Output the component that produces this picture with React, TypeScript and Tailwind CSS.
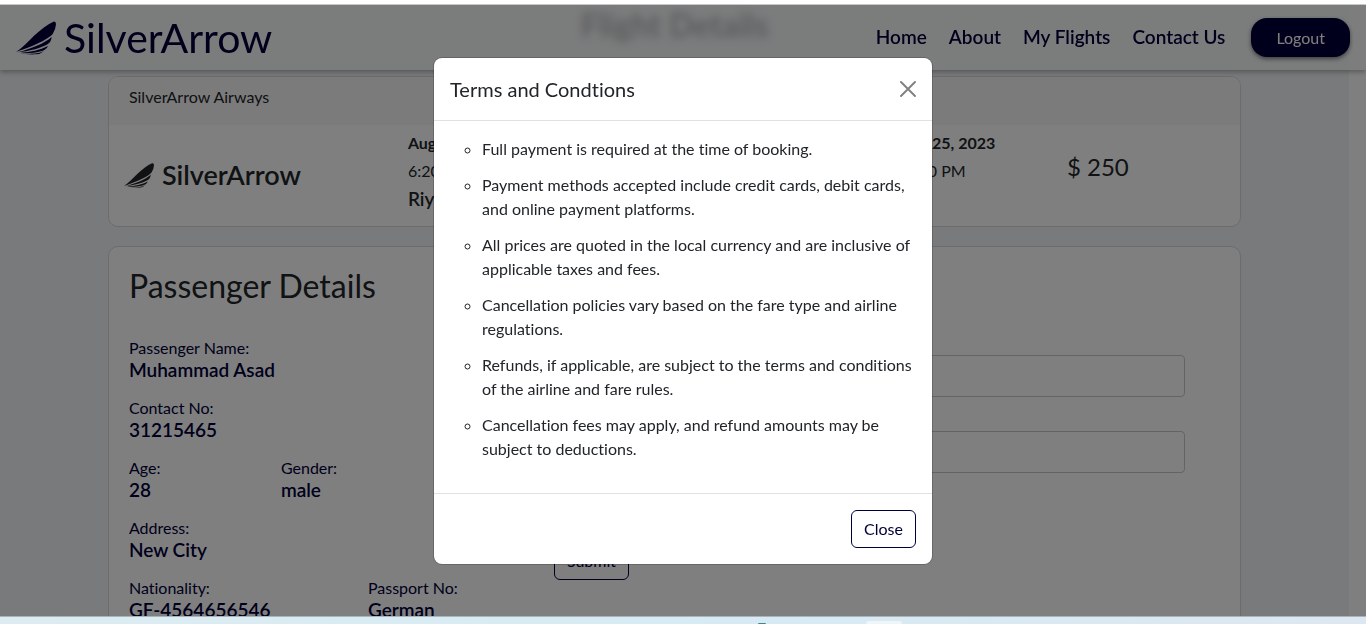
import React from "react";

const terms = [
  "Full payment is required at the time of booking.",
  "Payment methods accepted include credit cards, debit cards, and online payment platforms.",
  "All prices are quoted in the local currency and are inclusive of applicable taxes and fees.",
  "Cancellation policies vary based on the fare type and airline regulations.",
  "Refunds, if applicable, are subject to the terms and conditions of the airline and fare rules.",
  "Cancellation fees may apply, and refund amounts may be subject to deductions.",
];

function Wing({ className }: { className: string }) {
  return (
    <svg viewBox="0 0 120 98" className={className} fill="currentColor" aria-hidden="true">
      <path d="M0 91C20 78 36 60 54 42C74 24 94 8 112 0Q120 -2 120 8Q119 24 110 37C96 52 66 68 0 91Z" />
      <path d="M6 92C50 79 84 66 107 46Q106 62 92 69C70 80 40 88 6 92Z" />
      <path d="M12 94C44 91 72 85 96 73Q91 84 78 88C56 94 34 96 12 94Z" />
      <path d="M28 97C48 97 66 96 84 89Q73 98 58 98C48 99 38 98 28 97Z" />
    </svg>
  );
}

function Field({ label, value, className = "" }: { label: string; value: string; className?: string }) {
  return (
    <div className={className}>
      <dt className="text-base leading-5">{label}</dt>
      <dd className="text-[19px] leading-6 font-semibold">{value}</dd>
    </div>
  );
}

export default function App() {
  return (
    <div className="flex h-screen flex-col overflow-hidden bg-white font-['Lato',sans-serif] text-base text-[#212529] [font-variant-ligatures:none]">
      <div className="h-[5px] shrink-0 border-b border-[#c8c8c8] bg-white" />
      <div className="relative min-h-0 flex-1 overflow-hidden">
        <div className="h-full overflow-hidden pr-[17px]">
          <main className="flex min-h-full flex-col items-center bg-[#f1f4f7]">
            <h1 className="pb-8 text-[32px] leading-[39px] font-bold">Flight Details</h1>
            <section className="mb-[19px] w-[84%] rounded-[10px] border border-[#d8d8d8] bg-white">
              <header className="h-12 rounded-t-[10px] bg-[#f7f7f7] px-5 pt-2 leading-6">SilverArrow Airways</header>
              <div className="flex h-[101px]">
                <div className="flex w-[299px] items-center gap-2 pl-[15px] text-[27px] font-semibold">
                  <Wing className="h-[25px] w-[30px]" />
                  SilverArrow
                </div>
                <div className="w-[488px] pt-1">
                  <p className="leading-7 font-bold">August 25, 2023</p>
                  <p className="leading-7">6:20 PM</p>
                  <p className="text-[19px] leading-7 font-semibold">Riyadh</p>
                </div>
                <div className="w-[171px] pt-1">
                  <p className="leading-7 font-bold">Sept 25, 2023</p>
                  <p className="leading-7">10:20 PM</p>
                </div>
                <p className="pt-6 text-2xl leading-9">$ 250</p>
              </div>
            </section>
            <section className="flex w-[84%] rounded-[10px] border border-[#d8d8d8] bg-white px-5 pt-[19px] pb-10">
              <div className="w-[425px] text-[#000038]">
                <h2 className="mb-8 text-[32px] leading-10 text-[#212529]">Passenger Details</h2>
                <dl className="flex flex-col gap-4">
                  <Field label="Passenger Name:" value="Muhammad Asad" />
                  <Field label="Contact No:" value="31215465" />
                  <div className="flex">
                    <Field label="Age:" value="28" className="w-[152px]" />
                    <Field label="Gender:" value="male" />
                  </div>
                  <Field label="Address:" value="New City" />
                  <div className="flex">
                    <Field label="Nationality:" value="GF-4564656546" className="w-[239px]" />
                    <Field label="Passport No:" value="German" />
                  </div>
                </dl>
              </div>
              <form className="mr-[35px] flex flex-1 flex-col items-start pt-[57px]" onSubmit={(e) => e.preventDefault()}>
                <label htmlFor="card-name" className="mb-2 leading-6">Name on Card</label>
                <input id="card-name" className="mb-[2px] h-[42px] w-full rounded border border-[#c8c8c8] bg-white px-3" />
                <label htmlFor="card-number" className="mb-2 leading-6">Card Number</label>
                <input id="card-number" className="h-[42px] w-full rounded border border-[#c8c8c8] bg-white px-3" />
                <button className="mt-[69px] h-[38px] rounded-md border border-[#000038] px-3 text-[#000038]">Submit</button>
              </form>
            </section>
          </main>
        </div>

        <nav className="absolute inset-x-0 top-0 flex h-[65px] items-center justify-between bg-[#f8f9fa]/70 px-4 text-[#000038] shadow-[0_2px_5px_rgba(0,0,0,0.3)] backdrop-blur-[4px]">
          <a href="#home" className="flex items-center gap-2 text-[41px] leading-[60px]">
            <Wing className="h-[34px] w-10" />
            SilverArrow
          </a>
          <div className="flex items-center gap-[22px] text-[19px] font-semibold">
            <a href="#home">Home</a>
            <a href="#about">About</a>
            <a href="#flights">My Flights</a>
            <a href="#contact">Contact Us</a>
            <button className="ml-1 h-[39px] rounded-2xl bg-[#000038] px-[25px] text-base font-normal text-white shadow-[0_2px_4px_rgba(0,0,0,0.5)]">Logout</button>
          </div>
        </nav>

        <div className="absolute inset-0 flex items-start justify-center bg-black/50 pt-[53px]">
          <div role="dialog" aria-modal="true" aria-labelledby="terms-title" className="w-[498px] rounded-lg bg-white shadow-[0_0_0_1px_rgba(0,0,0,0.18)]">
            <header className="flex items-center justify-between border-b border-[#dee2e6] p-4">
              <h2 id="terms-title" className="text-xl leading-[30px]">Terms and Condtions</h2>
              <button aria-label="Close dialog" className="text-[#808080]">
                <svg viewBox="0 0 16 16" className="size-4" stroke="currentColor" strokeWidth="1.9" strokeLinecap="round"><path d="M1 1L15 15M15 1L1 15" /></svg>
              </button>
            </header>
            <ul className="flex list-[circle] flex-col gap-3 py-4 pr-4 pl-12 leading-6">
              {terms.map((term) => (
                <li key={term}>{term}</li>
              ))}
            </ul>
            <footer className="mt-4 flex justify-end border-t border-[#dee2e6] p-4">
              <button className="h-[38px] rounded-md border border-[#000038] px-3 text-[#000038]">Close</button>
            </footer>
          </div>
        </div>
      </div>
      <div className="flex h-2 shrink-0 items-end justify-center gap-[100px] overflow-hidden border-t border-[#a8b4ba] bg-linear-to-r from-[#dcecf1] via-[#d7ebf4] to-[#dce7f1] pl-[294px]">
        <span className="h-px w-2 rounded-t-full bg-[#3d8793]" />
        <span className="h-[3px] w-9 rounded-t bg-[#eef6fa]" />
      </div>
    </div>
  );
}
